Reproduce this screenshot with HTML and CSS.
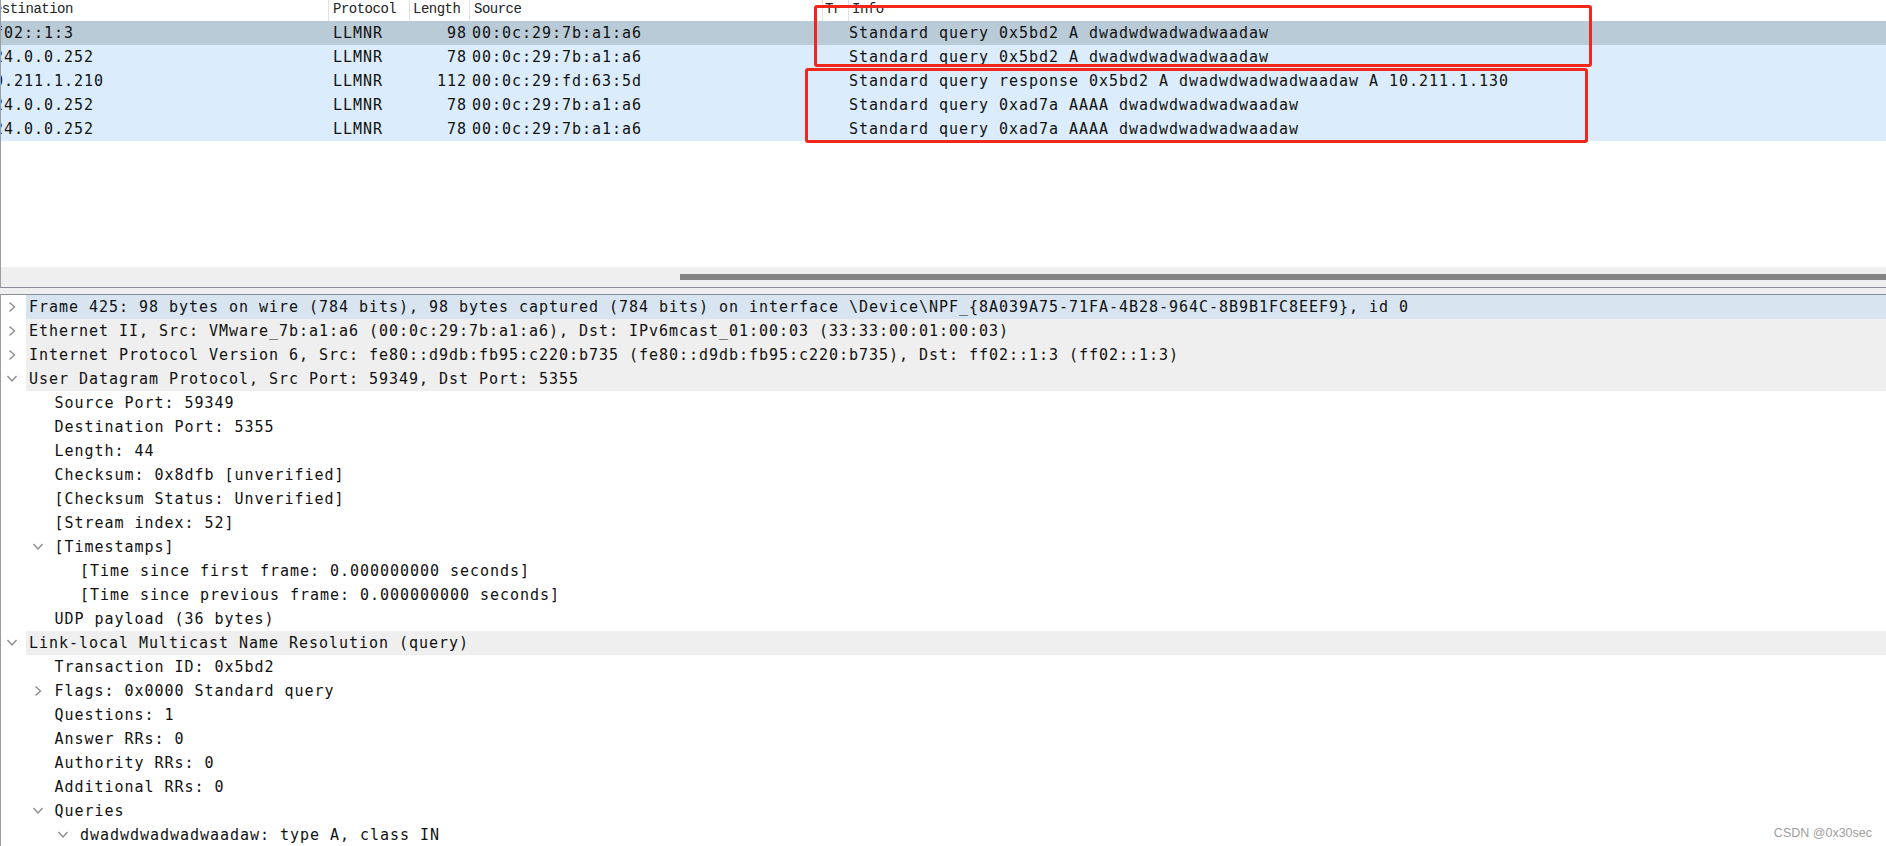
FILE: index.html
```html
<!DOCTYPE html>
<html>
<head>
<meta charset="utf-8">
<title>Wireshark</title>
<link rel="stylesheet" href="styles.css">
</head>
<body>
<div class="screen">
  <section class="list-pane">
    <div class="list-head">
      <div class="hc c-dst"><span class="dst-h">Destination</span></div>
      <div class="hc c-proto">Protocol</div>
      <div class="hc c-len">Length</div>
      <div class="hc c-src">Source</div>
      <div class="hc c-tr">Tr</div>
      <div class="hc c-info">Info</div>
    </div>
    <div class="list-body">
      <div class="prow sel">
        <div class="pc c-dst">ff02::1:3</div>
        <div class="pc c-proto">LLMNR</div>
        <div class="pc c-len">98</div>
        <div class="pc c-src">00:0c:29:7b:a1:a6</div>
        <div class="pc c-tr"></div>
        <div class="pc c-info">Standard query 0x5bd2 A dwadwdwadwadwaadaw</div>
      </div>
      <div class="prow">
        <div class="pc c-dst">224.0.0.252</div>
        <div class="pc c-proto">LLMNR</div>
        <div class="pc c-len">78</div>
        <div class="pc c-src">00:0c:29:7b:a1:a6</div>
        <div class="pc c-tr"></div>
        <div class="pc c-info">Standard query 0x5bd2 A dwadwdwadwadwaadaw</div>
      </div>
      <div class="prow">
        <div class="pc c-dst">10.211.1.210</div>
        <div class="pc c-proto">LLMNR</div>
        <div class="pc c-len">112</div>
        <div class="pc c-src">00:0c:29:fd:63:5d</div>
        <div class="pc c-tr"></div>
        <div class="pc c-info">Standard query response 0x5bd2 A dwadwdwadwadwaadaw A 10.211.1.130</div>
      </div>
      <div class="prow">
        <div class="pc c-dst">224.0.0.252</div>
        <div class="pc c-proto">LLMNR</div>
        <div class="pc c-len">78</div>
        <div class="pc c-src">00:0c:29:7b:a1:a6</div>
        <div class="pc c-tr"></div>
        <div class="pc c-info">Standard query 0xad7a AAAA dwadwdwadwadwaadaw</div>
      </div>
      <div class="prow">
        <div class="pc c-dst">224.0.0.252</div>
        <div class="pc c-proto">LLMNR</div>
        <div class="pc c-len">78</div>
        <div class="pc c-src">00:0c:29:7b:a1:a6</div>
        <div class="pc c-tr"></div>
        <div class="pc c-info">Standard query 0xad7a AAAA dwadwdwadwadwaadaw</div>
      </div>
    </div>
    <div class="list-fill"></div>
    <div class="hscroll"><div class="thumb"></div></div>
  </section>

  <div class="splitter"></div>

  <section class="tree-pane">
    <div class="trow cur"><span class="exp"><svg class="chev" viewBox="0 0 10 10"><path d="M2.5 0.5 L7.5 5 L2.5 9.5"/></svg></span><span class="txt">Frame 425: 98 bytes on wire (784 bits), 98 bytes captured (784 bits) on interface \Device\NPF_{8A039A75-71FA-4B28-964C-8B9B1FC8EEF9}, id 0</span></div>
    <div class="trow top"><span class="exp"><svg class="chev" viewBox="0 0 10 10"><path d="M2.5 0.5 L7.5 5 L2.5 9.5"/></svg></span><span class="txt">Ethernet II, Src: VMware_7b:a1:a6 (00:0c:29:7b:a1:a6), Dst: IPv6mcast_01:00:03 (33:33:00:01:00:03)</span></div>
    <div class="trow top"><span class="exp"><svg class="chev" viewBox="0 0 10 10"><path d="M2.5 0.5 L7.5 5 L2.5 9.5"/></svg></span><span class="txt">Internet Protocol Version 6, Src: fe80::d9db:fb95:c220:b735 (fe80::d9db:fb95:c220:b735), Dst: ff02::1:3 (ff02::1:3)</span></div>
    <div class="trow top"><span class="exp"><svg class="chev" viewBox="0 0 10 10"><path d="M0.5 2 L5 7 L9.5 2"/></svg></span><span class="txt">User Datagram Protocol, Src Port: 59349, Dst Port: 5355</span></div>
    <div class="trow l1"><span class="exp"></span><span class="txt">Source Port: 59349</span></div>
    <div class="trow l1"><span class="exp"></span><span class="txt">Destination Port: 5355</span></div>
    <div class="trow l1"><span class="exp"></span><span class="txt">Length: 44</span></div>
    <div class="trow l1"><span class="exp"></span><span class="txt">Checksum: 0x8dfb [unverified]</span></div>
    <div class="trow l1"><span class="exp"></span><span class="txt">[Checksum Status: Unverified]</span></div>
    <div class="trow l1"><span class="exp"></span><span class="txt">[Stream index: 52]</span></div>
    <div class="trow l1"><span class="exp"><svg class="chev" viewBox="0 0 10 10"><path d="M0.5 2 L5 7 L9.5 2"/></svg></span><span class="txt">[Timestamps]</span></div>
    <div class="trow l2"><span class="exp"></span><span class="txt">[Time since first frame: 0.000000000 seconds]</span></div>
    <div class="trow l2"><span class="exp"></span><span class="txt">[Time since previous frame: 0.000000000 seconds]</span></div>
    <div class="trow l1"><span class="exp"></span><span class="txt">UDP payload (36 bytes)</span></div>
    <div class="trow top"><span class="exp"><svg class="chev" viewBox="0 0 10 10"><path d="M0.5 2 L5 7 L9.5 2"/></svg></span><span class="txt">Link-local Multicast Name Resolution (query)</span></div>
    <div class="trow l1"><span class="exp"></span><span class="txt">Transaction ID: 0x5bd2</span></div>
    <div class="trow l1"><span class="exp"><svg class="chev" viewBox="0 0 10 10"><path d="M2.5 0.5 L7.5 5 L2.5 9.5"/></svg></span><span class="txt">Flags: 0x0000 Standard query</span></div>
    <div class="trow l1"><span class="exp"></span><span class="txt">Questions: 1</span></div>
    <div class="trow l1"><span class="exp"></span><span class="txt">Answer RRs: 0</span></div>
    <div class="trow l1"><span class="exp"></span><span class="txt">Authority RRs: 0</span></div>
    <div class="trow l1"><span class="exp"></span><span class="txt">Additional RRs: 0</span></div>
    <div class="trow l1"><span class="exp"><svg class="chev" viewBox="0 0 10 10"><path d="M0.5 2 L5 7 L9.5 2"/></svg></span><span class="txt">Queries</span></div>
    <div class="trow l2"><span class="exp"><svg class="chev" viewBox="0 0 10 10"><path d="M0.5 2 L5 7 L9.5 2"/></svg></span><span class="txt">dwadwdwadwadwaadaw: type A, class IN</span></div>
  </section>

  <div class="mark mark-a"></div>
  <div class="mark mark-b"></div>
  <div class="watermark">CSDN @0x30sec</div>
</div>
</body>
</html>
```

FILE: styles.css
```css
* { box-sizing: border-box; }

html, body {
  margin: 0;
  padding: 0;
  background: #ffffff;
}

.screen {
  position: relative;
  width: 1886px;
  height: 846px;
  overflow: hidden;
  display: flex;
  flex-direction: column;
  background: #ffffff;
  color: #111111;
}

/* ---------- packet list ---------- */
.list-pane {
  height: 288px;
  flex: none;
  display: flex;
  flex-direction: column;
  border-left: 1px solid #9b9ca0;
  border-bottom: 1px solid #8b8e96;
  overflow: hidden;
}

.list-head {
  display: flex;
  height: 21px;
  flex: none;
  font-family: "Liberation Mono", monospace;
  font-size: 14px;
  letter-spacing: -0.5px;
  line-height: 19px;
  color: #222;
  background: #ffffff;
}

.hc {
  height: 21px;
  border-right: 1px solid #e3e3e3;
  white-space: pre;
  overflow: hidden;
  flex: none;
}

.c-dst { width: 328px; }
.c-proto { width: 81px; }
.c-len { width: 60px; }
.c-src { width: 353px; }
.c-tr { width: 26px; }
.c-info { flex: 1 1 auto; width: auto; border-right: 0; }

.hc.c-dst { text-indent: -15px; }
.hc.c-proto { padding-left: 4px; }
.hc.c-len { padding-left: 3px; }
.hc.c-src { padding-left: 4px; }
.hc.c-tr { padding-left: 2px; }
.hc.c-info { padding-left: 3px; }

.list-body {
  flex: none;
  font-family: "DejaVu Sans Mono", monospace;
  font-size: 15px;
  letter-spacing: 0.97px;
}

.prow {
  display: flex;
  height: 24px;
  line-height: 24px;
  background: #dbedfd;
}

.prow.sel { background: #bacbd8; }

.pc {
  height: 24px;
  white-space: pre;
  overflow: hidden;
  flex: none;
  border-right: 1px solid transparent;
}

.pc.c-dst { text-indent: -17px; }
.pc.c-proto { padding-left: 4px; }
.pc.c-len { text-align: right; padding-right: 2px; }
.pc.c-src { padding-left: 2px; }
.pc.c-info { padding-left: 0; border-right: 0; }

.list-fill { flex: 1 1 auto; }

.hscroll {
  flex: none;
  height: 20px;
  background: #efefef;
  padding: 7px 0 7px 679px;
}

.thumb {
  height: 6px;
  background: #858585;
}

.splitter {
  flex: none;
  height: 6px;
  background: #efefef;
}

/* ---------- packet details tree ---------- */
.tree-pane {
  flex: 1 1 auto;
  border-left: 1px solid #9b9ca0;
  border-top: 1px solid #8b8e96;
  overflow: hidden;
  font-family: "DejaVu Sans Mono", monospace;
  font-size: 15px;
  letter-spacing: 0.97px;
}

.trow {
  display: flex;
  height: 24px;
  line-height: 24px;
  align-items: stretch;
}

.trow.l1 { padding-left: 25.5px; }
.trow.l2 { padding-left: 51px; }

.exp {
  flex: none;
  width: 25px;
  display: flex;
  align-items: center;
}

.chev {
  width: 10px;
  height: 10px;
  margin-left: 6px;
}

.chev path {
  fill: none;
  stroke: #8a8a8a;
  stroke-width: 1.3;
}

.txt {
  flex: 1 1 auto;
  padding-left: 3px;
  white-space: pre;
  overflow: hidden;
}

.trow.top .txt { background: #efefef; }
.trow.cur .txt { background: #d8e5f1; }

/* ---------- annotations ---------- */
.mark {
  position: absolute;
  border: 3px solid #f3261c;
  border-radius: 3px;
  pointer-events: none;
}

.mark-a { left: 814px; top: 5px; width: 778px; height: 62px; }
.mark-b { left: 805px; top: 68px; width: 783px; height: 75px; }

.watermark {
  position: absolute;
  right: 14px;
  bottom: 6px;
  font-family: "Liberation Sans", Arial, sans-serif;
  font-size: 12.5px;
  color: #a0a0a0;
}
```
